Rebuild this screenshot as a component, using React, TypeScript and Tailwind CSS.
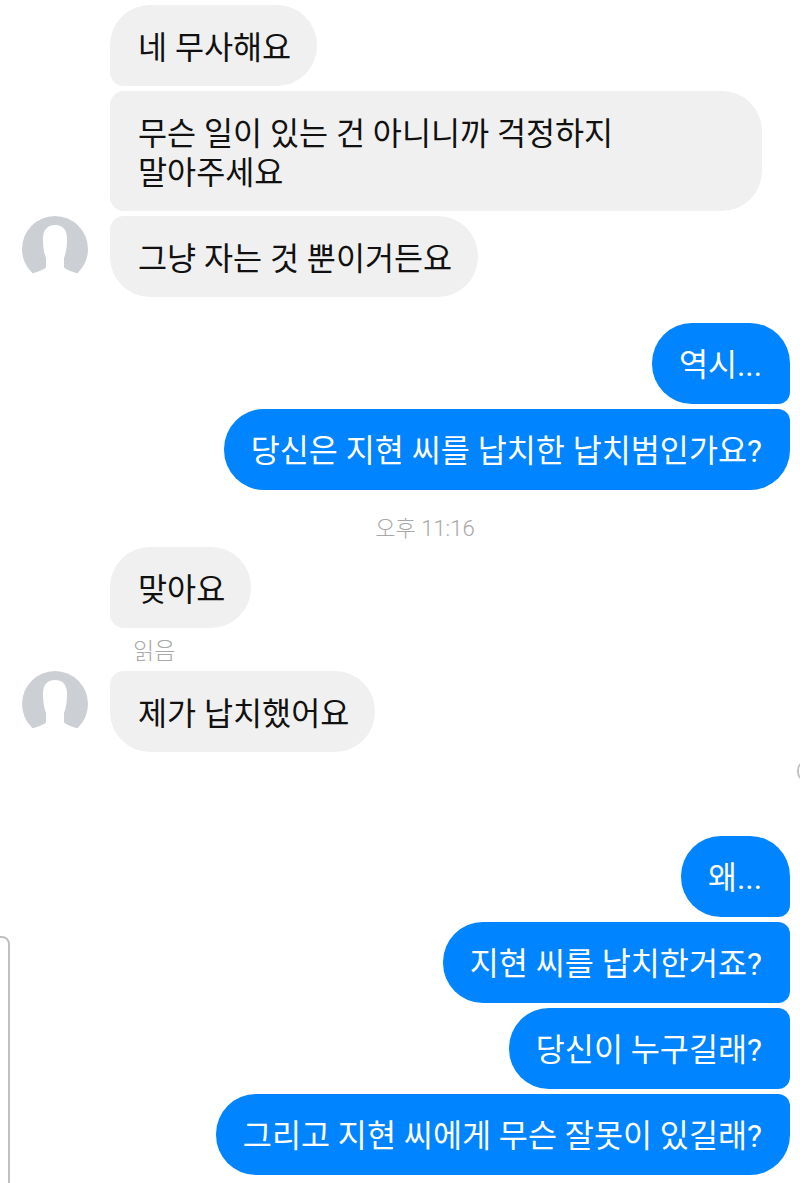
const font = "font-['Roboto','Noto_Sans_CJK_KR',sans-serif]";

const Avatar = () => (
  <svg viewBox="0 0 66 66" className="h-[66px] w-[66px] shrink-0">
    <circle cx="33" cy="33" r="33" fill="#ccd0d5" />
    <path
      d="M33 9c-8 0-12 5-12 14 0 8 1 14 3 19v9c0 2-9 5-15 7l3 8h42l3-8c-6-2-15-5-15-7v-9c2-5 3-11 3-19 0-9-4-14-12-14z"
      fill="#ffffff"
    />
  </svg>
);

const Incoming = ({ text, shape, avatar }: { text: React.ReactNode; shape: string; avatar?: boolean }) => (
  <div className="flex items-start">
    <div className="flex w-[110px] shrink-0 justify-end pr-[22px]">{avatar && <Avatar />}</div>
    <div className={`bg-[#f0f0f0] pb-[18px] pl-[28px] pr-[26px] pt-[24px] text-[31.6px] leading-[39px] text-[#111111] ${shape}`}>{text}</div>
  </div>
);

const Outgoing = ({ text, shape }: { text: string; shape: string }) => (
  <div className="flex justify-end pr-[10px]">
    <div className={`bg-[#0084ff] pb-[19px] pl-[27px] pr-[28px] pt-[23px] text-[31.6px] leading-[39px] text-white ${shape}`}>{text}</div>
  </div>
);

export default function App() {
  return (
    <div className={`relative h-[1183px] w-[800px] overflow-hidden bg-white pt-[5px] ${font}`}>
      <div className="flex flex-col gap-[5px]">
        <Incoming text="네 무사해요" shape="rounded-[40px] rounded-bl-[14px]" />
        <Incoming
          text={<div className="w-[598px]">무슨 일이 있는 건 아니니까 걱정하지<br />말아주세요</div>}
          shape="rounded-[40px] rounded-tl-[14px] rounded-bl-[14px]"
        />
        <Incoming text="그냥 자는 것 뿐이거든요" shape="rounded-[40px] rounded-tl-[14px]" avatar />
      </div>

      <div className="mt-[26px] flex flex-col gap-[5px]">
        <Outgoing text="역시..." shape="rounded-[40px] rounded-br-[12px]" />
        <Outgoing text="당신은 지현 씨를 납치한 납치범인가요?" shape="rounded-[40px] rounded-tr-[12px]" />
      </div>

      <div className="mt-[24px] flex h-[28px] justify-center pl-[50px] text-[22px] font-light leading-[30px] text-[#a8a8a8]">오후 11:16</div>

      <div className="mt-[5px]">
        <Incoming text="맞아요" shape="rounded-[40px] rounded-bl-[14px]" />
        <div className="ml-[133px] h-[43px] text-[23px] font-light leading-[47px] text-[#a8a8a8]">읽음</div>
        <Incoming text="제가 납치했어요" shape="rounded-[40px] rounded-tl-[14px]" avatar />
      </div>

      <div className="mt-[84px] flex flex-col gap-[5px]">
        <Outgoing text="왜..." shape="rounded-[40px] rounded-br-[12px]" />
        <Outgoing text="지현 씨를 납치한거죠?" shape="rounded-[40px] rounded-r-[12px]" />
        <Outgoing text="당신이 누구길래?" shape="rounded-[40px] rounded-r-[12px]" />
        <Outgoing text="그리고 지현 씨에게 무슨 잘못이 있길래?" shape="rounded-[40px] rounded-tr-[12px]" />
      </div>

      {/* clipped edges of other screenshots */}
      <div className="absolute left-[-20px] top-[936px] h-[260px] w-[30px] rounded-tr-[8px] border-2 border-[#c0c0c0]" />
      <div className="absolute left-[797px] top-[760px] h-[22px] w-[20px] rounded-full border-2 border-[#c4c4c4]" />
    </div>
  );
}
